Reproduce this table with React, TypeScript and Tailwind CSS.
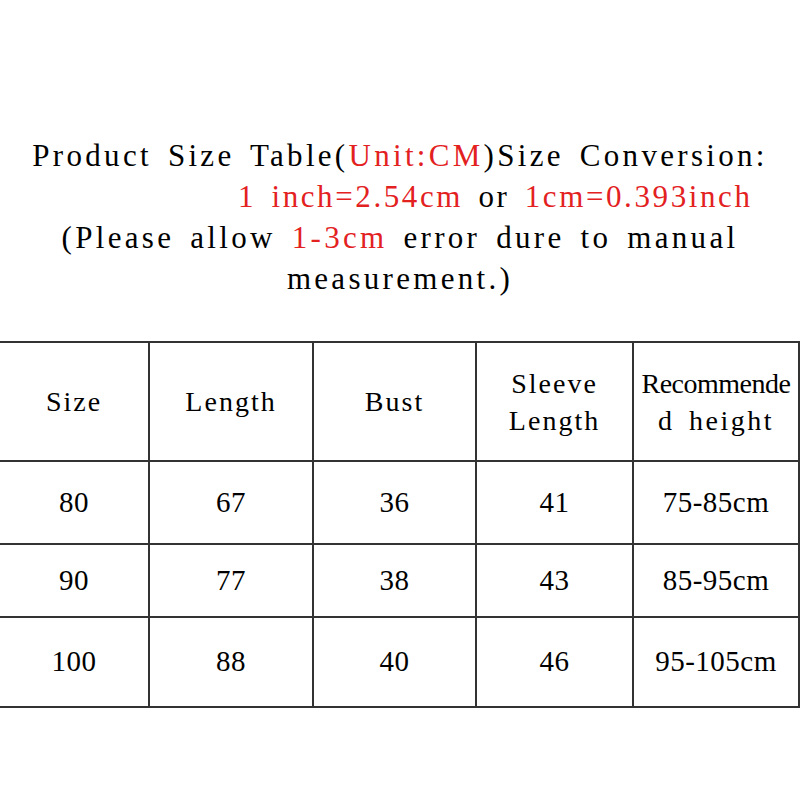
import React from "react";

const rows = [
  ["80", "67", "36", "41", "75-85cm", "h-[83px]"],
  ["90", "77", "38", "43", "85-95cm", "h-[73px]"],
  ["100", "88", "40", "46", "95-105cm", "h-[90px]"],
];

const cell = "flex items-center justify-center border-r-2 border-b-2 border-[#333]";

export default function App() {
  return (
    <div className="w-[800px] h-[800px] bg-white overflow-hidden text-black font-['Liberation_Serif','Times_New_Roman',serif]">
      <div className="pt-[135px] text-[31px] leading-[41px] tracking-[3.3px] [word-spacing:5px]">
        <div className="text-center whitespace-nowrap">
          Product Size Table(<span className="text-[#e3211f]">Unit:CM</span>)Size Conversion:
        </div>
        <div className="pl-[238px] whitespace-nowrap tracking-[2.6px]">
          <span className="text-[#e3211f]">1 inch=2.54cm</span> or <span className="text-[#e3211f]">1cm=0.393inch</span>
        </div>
        <div className="text-center whitespace-nowrap">
          (Please allow <span className="text-[#e3211f]">1-3cm</span> error dure to manual
        </div>
        <div className="text-center whitespace-nowrap">measurement.)</div>
      </div>

      <div className="mt-[42px] border-t-2 border-[#333] grid grid-cols-[150px_164px_163px_157px_166px]">
        <div className={`${cell} h-[119px] text-[28px] tracking-[2px]`}>Size</div>
        <div className={`${cell} h-[119px] text-[28px] tracking-[2px]`}>Length</div>
        <div className={`${cell} h-[119px] text-[28px] tracking-[2px]`}>Bust</div>
        <div className={`${cell} h-[119px] text-[28px] tracking-[2px] leading-[37px] text-center`}>
          Sleeve<br />Length
        </div>
        <div className={`${cell} h-[119px] text-[28px] tracking-[-0.5px] leading-[37px] text-center whitespace-nowrap`}>
          <div>
            Recommende<br />
            <span className="tracking-[2.5px] [word-spacing:5px]">d height</span>
          </div>
        </div>
        {rows.map((r) => (
          <React.Fragment key={r[0]}>
            {r.slice(0, 5).map((v, i) => (
              <div key={i} className={`${cell} ${r[5]} text-[29px] tracking-[0.5px]`}>
                {v}
              </div>
            ))}
          </React.Fragment>
        ))}
      </div>
    </div>
  );
}
